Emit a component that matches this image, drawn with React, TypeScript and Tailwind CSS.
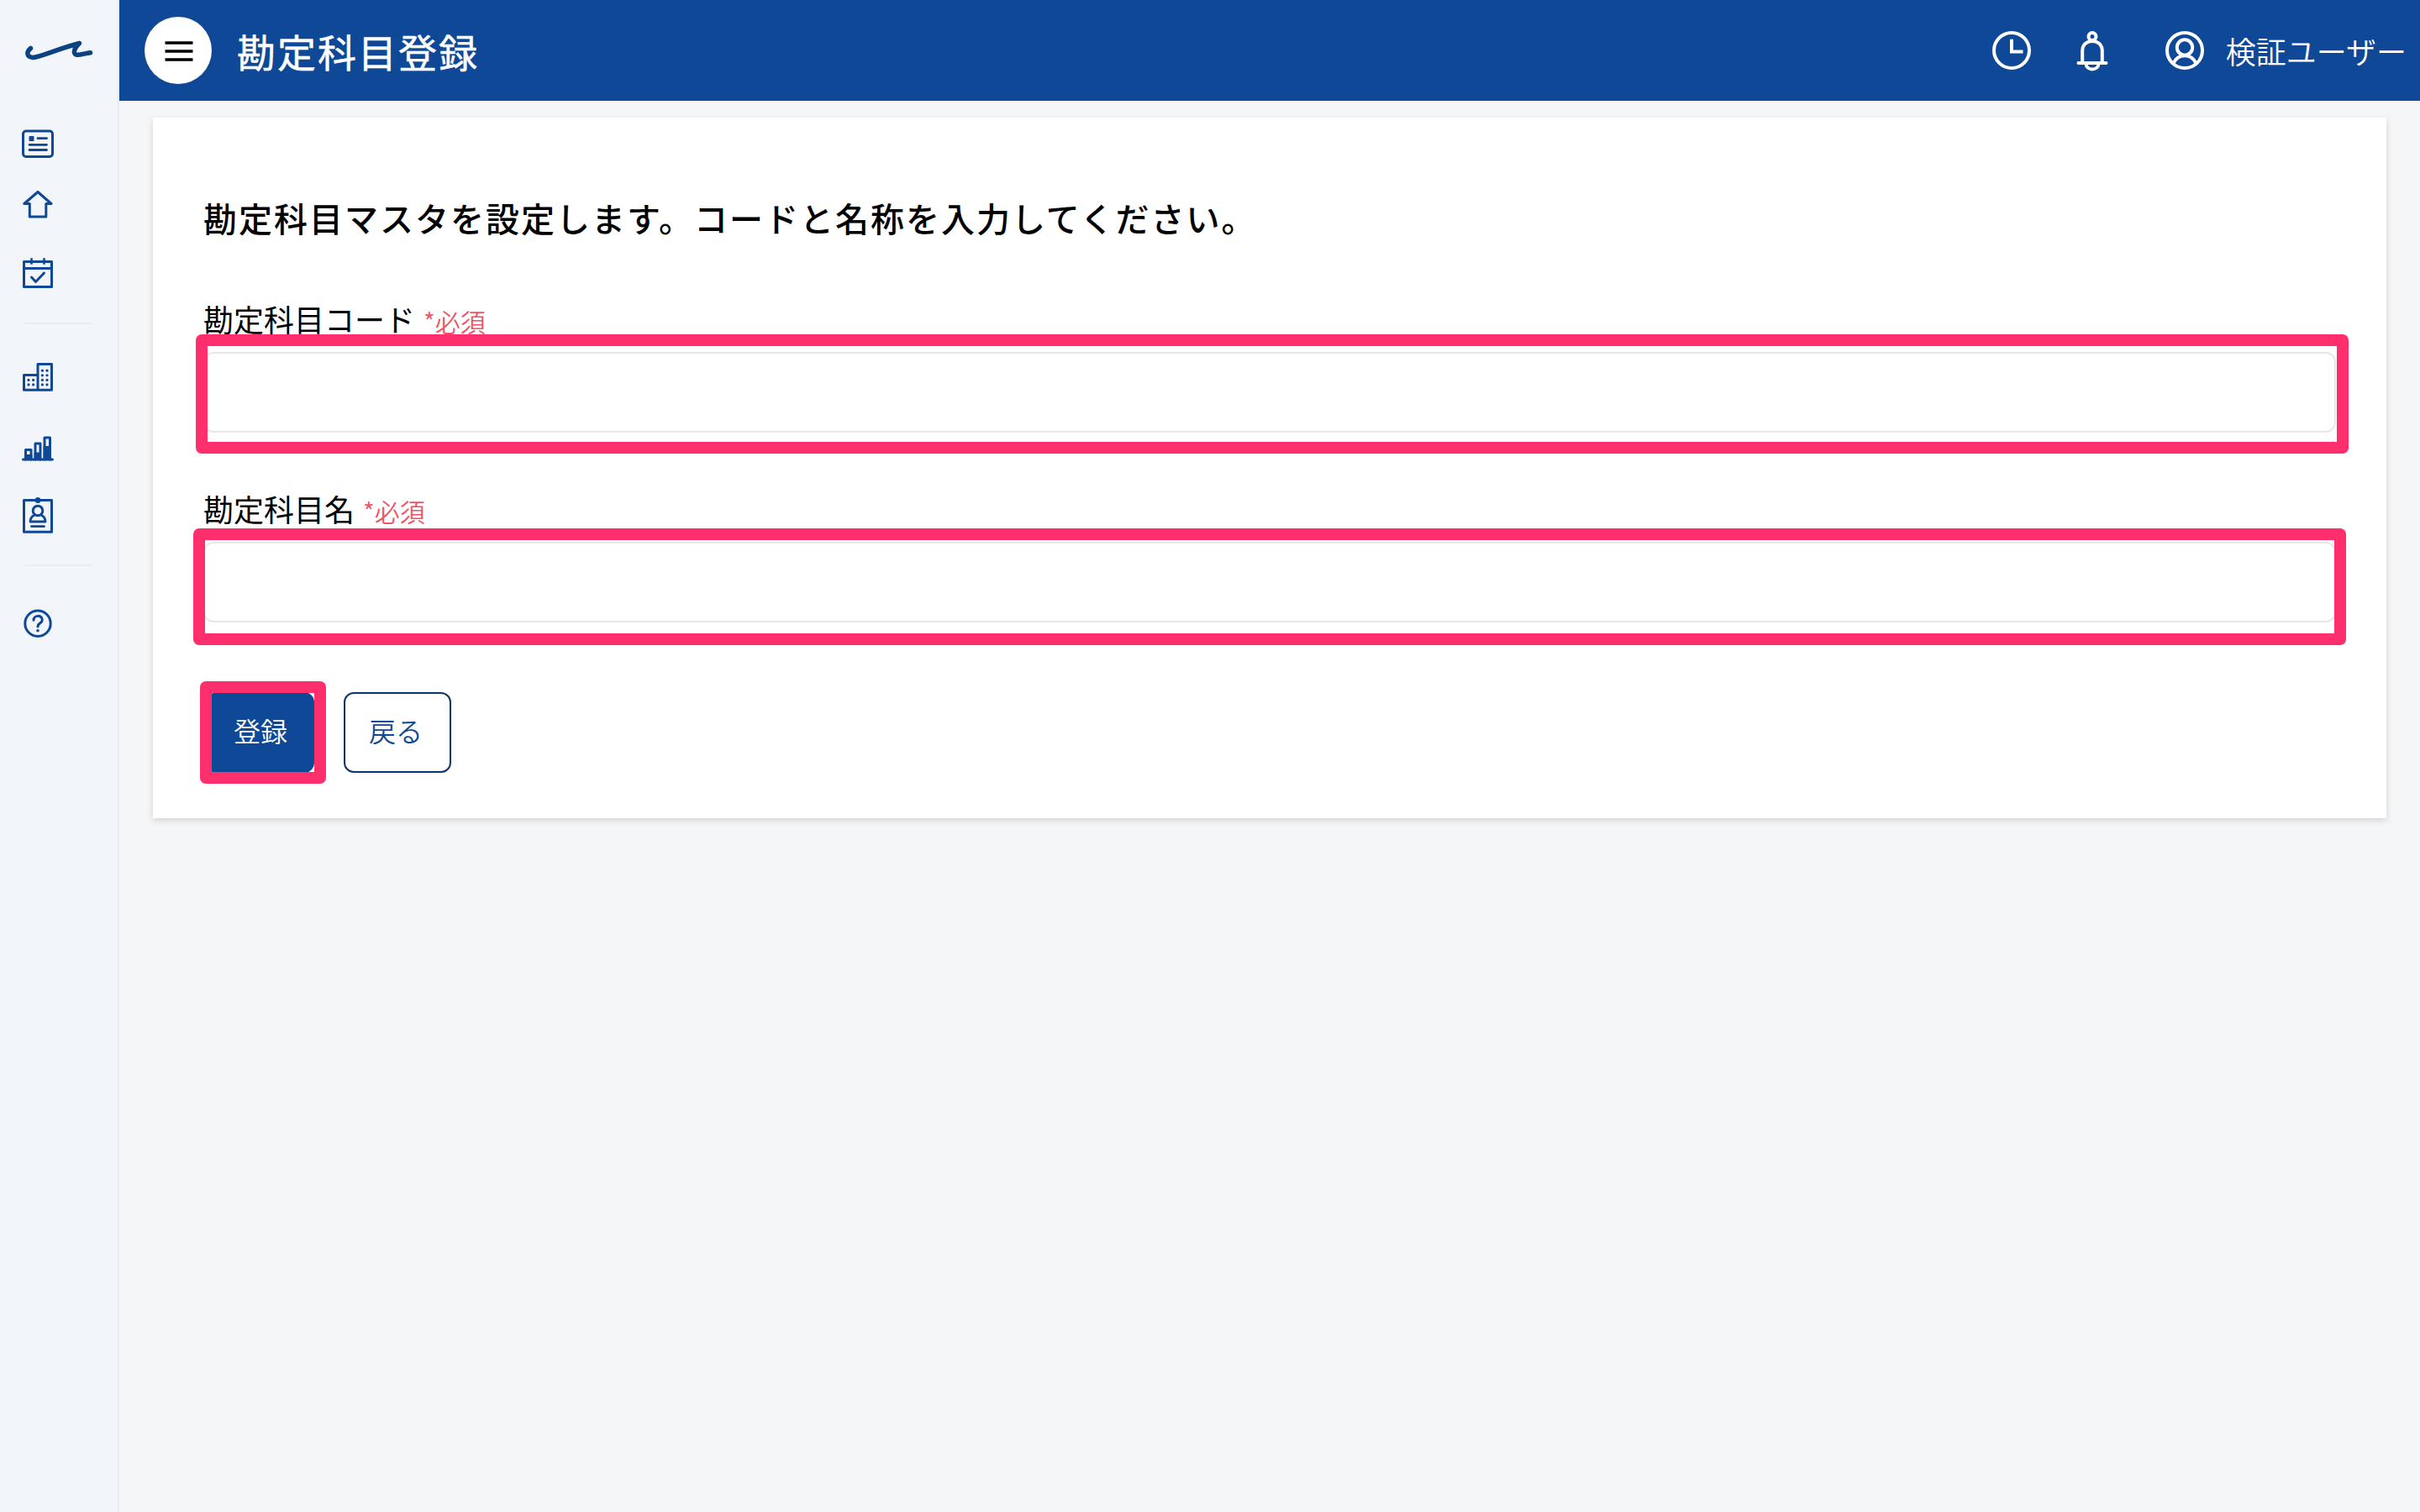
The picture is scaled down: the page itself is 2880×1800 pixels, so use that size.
import type { ReactNode } from "react";

type IconProps = {
  width: number;
  height: number;
  className?: string;
  strokeWidth?: number;
  children: ReactNode;
};

function Icon({ width, height, className = "", strokeWidth = 3, children }: IconProps) {
  return (
    <svg
      width={width}
      height={height}
      viewBox={`0 0 ${width} ${height}`}
      fill="none"
      stroke="currentColor"
      strokeWidth={strokeWidth}
      strokeLinecap="round"
      strokeLinejoin="round"
      className={`block shrink-0 ${className}`}
    >
      {children}
    </svg>
  );
}

function Sidebar() {
  return (
    <aside className="flex w-[142px] shrink-0 flex-col border-r-2 border-[#e6ebf5] bg-[#f2f6fb] text-[#0e4896]">
      {/* Logo */}
      <Icon width={84} height={26} strokeWidth={5.5} className="mt-[47px] ml-7 text-[#0c4182]">
        <path d="M8.500 10.500C4 14 2.500 20.500 11 21.500C19 21.500 38 12 66.500 4.500C61 9.500 57.500 17 63.500 18.300C68 18.700 73 16.500 79.500 15.800" />
      </Icon>

      <nav className="flex flex-col pl-[25px]">
        <Icon width={40} height={36} className="mt-20">
          <rect x="2.500" y="3" width="35" height="30.500" rx="3.500" />
          <rect x="9.500" y="9" width="6" height="6" rx="0.800" fill="currentColor" stroke="none" />
          <path d="M20 11.700h10.500M10 19.300h20.500M10 25.500h20.500" strokeWidth="2.800" />
        </Icon>
        <Icon width={40} height={36} className="mt-[36px]">
          <path d="M20 3.500L36 17.500H29.800V33H10.300V17.500H3.800Z" />
        </Icon>
        <Icon width={40} height={40} className="mt-[44px]">
          <path d="M3.500 6.500h33v30h-33zM3.500 14.500h33" />
          <path d="M12.500 3.500v5M27.500 3.500v5" strokeLinecap="square" strokeWidth="2.600" />
          <path d="M12.500 25l5 5.500L27.500 20" />
        </Icon>

        <div className="mt-[39px] ml-[5px] h-0.5 w-20 bg-[#e6ebf5]" />

        <Icon width={40} height={38} className="mt-[44px]">
          <path d="M20 3.500h16.500v30.700h-33V16.500H20zM20 3.500v30" />
          <g fill="currentColor" stroke="none">
            {[22.4, 27.9].map((y) => [9, 14.6, 25.4, 31].map((x) => <circle key={`${x}-${y}`} cx={x} cy={y} r="1.600" />))}
            {[11.2, 16.8].map((y) => [25.4, 31].map((x) => <circle key={`${x}-${y}`} cx={x} cy={y} r="1.600" />))}
          </g>
        </Icon>
        <Icon width={40} height={34} className="mt-[49px]">
          <path d="M2.500 30h35" />
          <path d="M5.500 30V18.500h6.500V30M17 30V11h6V30M28 30V4h6.500V30" />
          <path d="M5 24.500h8V30H5zM16.500 22h7v8h-7zM27.500 14.500h7V30h-7z" fill="currentColor" strokeWidth="1" />
        </Icon>
        <Icon width={40} height={48} className="mt-[39px]">
          <path d="M3.500 5.500h33v37.700h-33z" />
          <circle cx="20" cy="5.500" r="3.500" fill="currentColor" stroke="none" />
          <circle cx="20" cy="18" r="5.800" />
          <path d="M15.500 23.500C12.500 25 11 28 11 31h18C29 28 27.500 25 24.500 23.500M12.500 36.700h15" strokeWidth="2.800" />
        </Icon>

        <div className="mt-[34px] ml-[5px] h-0.5 w-20 bg-[#e6ebf5]" />

        <Icon width={40} height={40} className="mt-12">
          <circle cx="20" cy="20.300" r="15.200" />
          <path d="M15 16.200C15 9.800 25.300 9.800 25.300 16C25.300 20 20 19.500 20 24" />
          <circle cx="20" cy="28.700" r="1.800" fill="currentColor" stroke="none" />
        </Icon>
      </nav>
    </aside>
  );
}

function Header() {
  return (
    <header className="flex h-[120px] items-center bg-[#0e4896] pl-[30px] text-white">
      <button className="flex size-20 items-center justify-center rounded-full bg-white pl-0.5 text-black">
        <Icon width={34} height={26} strokeWidth={3.4}>
          <path d="M0.500 4h33M0.500 14h33M0.500 24h33" strokeLinecap="butt" />
        </Icon>
      </button>
      <h1 className="ml-[30px] text-[46px] leading-none font-normal tracking-[2px] [-webkit-text-stroke:0.5px_white]">
        勘定科目登録
      </h1>

      <div className="ml-auto flex items-center pr-4">
        <Icon width={50} height={50} strokeWidth={4}>
          <circle cx="25" cy="25" r="21" />
          <path d="M25 11.800V26.500H38.500" strokeLinecap="butt" strokeLinejoin="miter" />
        </Icon>
        <Icon width={50} height={50} strokeWidth={4} className="ml-[46px]">
          <circle cx="25" cy="8.500" r="4.500" />
          <path d="M13.200 39V25.500C13.200 10 36.800 10 36.800 25.500V39M8.500 40h33M17.500 41C18 49.500 32 49.500 32.500 41" />
        </Icon>
        <Icon width={50} height={50} strokeWidth={4} className="ml-[60px]">
          <circle cx="25" cy="25" r="21" />
          <circle cx="25" cy="21.500" r="9.200" />
          <path d="M11.500 40.500C17 28 33 28 38.500 40.500" />
        </Icon>
        <span className="ml-6 text-[36px] leading-none font-[350]">検証ユーザー</span>
      </div>
    </header>
  );
}

/* Frame drawn over a control to point it out */
function Highlight({ className }: { className: string }) {
  return <div className={`pointer-events-none absolute rounded-[7px] border-[14px] border-[#ff2e6d] ${className}`} />;
}

function Field({ label, highlight }: { label: string; highlight: string }) {
  return (
    <div>
      <label className="flex h-10 items-center leading-10">
        <span className="text-[36px]">{label}</span>
        <span className="ml-2.5 pt-[5px] text-[30px] font-[350] text-[#ee5566]">*必須</span>
      </label>
      <div className="relative mt-5">
        <input type="text" className="block h-24 w-full rounded-xl border-2 border-[#e8e8e8] bg-white px-6 text-[32px]" />
        <Highlight className={highlight} />
      </div>
    </div>
  );
}

export default function App() {
  return (
    <div className="flex h-[1800px] w-[2880px] overflow-hidden bg-[#f4f6f8] font-['Noto_Sans_CJK_JP',sans-serif] text-black">
      <Sidebar />
      <div className="flex flex-1 flex-col">
        <Header />
        <main className="px-10 pt-5">
          <section className="h-[834px] bg-white px-[60px] pt-[95px] shadow-[0_3px_8px_rgba(0,0,0,0.14)]">
            <h2 className="h-12 text-[40px] leading-[48px] font-medium tracking-[2px]">
              勘定科目マスタを設定します。コードと名称を入力してください。
            </h2>

            <form className="mt-[76px]">
              <div className="flex flex-col gap-[70px]">
                <Field label="勘定科目コード" highlight="-top-[21px] -left-[9px] h-[142px] w-[2562px]" />
                <Field label="勘定科目名" highlight="-top-[16px] -left-[12px] h-[139px] w-[2562px]" />
              </div>

              <div className="mt-[83px] flex gap-[35px] pl-1 text-[32px] leading-none font-[350]">
                <div className="relative">
                  <button type="button" className="h-24 w-32 rounded-xl bg-[#0e4896] pb-1.5 text-white">
                    登録
                  </button>
                  <Highlight className="-top-[13px] -left-[8px] h-[122px] w-[150px]" />
                </div>
                <button type="button" className="h-24 w-32 rounded-xl border-2 border-[#0b3470] bg-white pr-1 pb-1.5 text-[#0e4896]">
                  戻る
                </button>
              </div>
            </form>
          </section>
        </main>
      </div>
    </div>
  );
}
